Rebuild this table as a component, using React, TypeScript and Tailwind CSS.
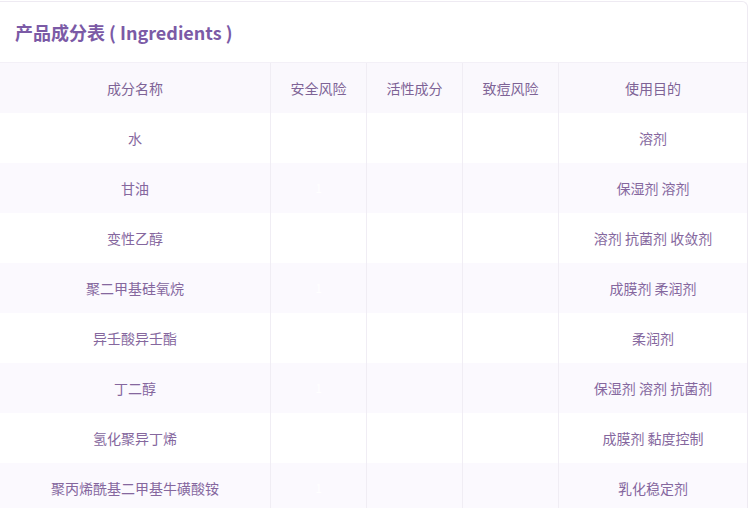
const ROWS = [
  { name: "水", safe: "", use: "溶剂" },
  { name: "甘油", safe: "1", use: "保湿剂 溶剂" },
  { name: "变性乙醇", safe: "", use: "溶剂 抗菌剂 收敛剂" },
  { name: "聚二甲基硅氧烷", safe: "1", use: "成膜剂 柔润剂" },
  { name: "异壬酸异壬酯", safe: "", use: "柔润剂" },
  { name: "丁二醇", safe: "1", use: "保湿剂 溶剂 抗菌剂" },
  { name: "氢化聚异丁烯", safe: "", use: "成膜剂 黏度控制" },
  { name: "聚丙烯酰基二甲基牛磺酸铵", safe: "1", use: "乳化稳定剂" },
];

const COLS = "grid grid-cols-[271px_96px_96px_96px_1fr]";

export default function App() {
  return (
    <div
      className="w-[751px] h-[508px] overflow-hidden bg-white pt-px pr-[3px]"
      style={{ fontFamily: '"Noto Sans CJK SC", "Liberation Sans", sans-serif' }}
    >
      <div className="border-t border-r border-[#eeeaf2] rounded-tr-md bg-white">
        {/* Title */}
        <div className="h-[60px] flex items-center px-[15px]">
          <h2 className="text-[18px] font-bold text-[#7b5aa6] whitespace-pre">
            产品成分表 ( Ingredients )
          </h2>
        </div>

        {/* Table header */}
        <div className={`${COLS} h-[51px] bg-[#faf8fd] border-t border-[#f3f0f7] text-[14px] text-[#7e6396]`}>
          <div className="flex items-center justify-center border-r border-[#f0edf4]">成分名称</div>
          <div className="flex items-center justify-center border-r border-[#f0edf4]">安全风险</div>
          <div className="flex items-center justify-center border-r border-[#f0edf4]">活性成分</div>
          <div className="flex items-center justify-center border-r border-[#f0edf4]">致痘风险</div>
          <div className="flex items-center justify-center">使用目的</div>
        </div>

        {/* Rows */}
        {ROWS.map((r, i) => (
          <div
            key={r.name}
            className={`${COLS} h-[50px] text-[14px] text-[#85679e] ${i % 2 === 1 ? "bg-[#fbf9fe]" : "bg-white"}`}
          >
            <div className="flex items-center justify-center border-r border-[#f0edf4]">{r.name}</div>
            <div className="flex items-center justify-center border-r border-[#f0edf4] text-white text-[12px]">{r.safe}</div>
            <div className="border-r border-[#f0edf4]" />
            <div className="border-r border-[#f0edf4]" />
            <div className="flex items-center justify-center">{r.use}</div>
          </div>
        ))}
      </div>
    </div>
  );
}
